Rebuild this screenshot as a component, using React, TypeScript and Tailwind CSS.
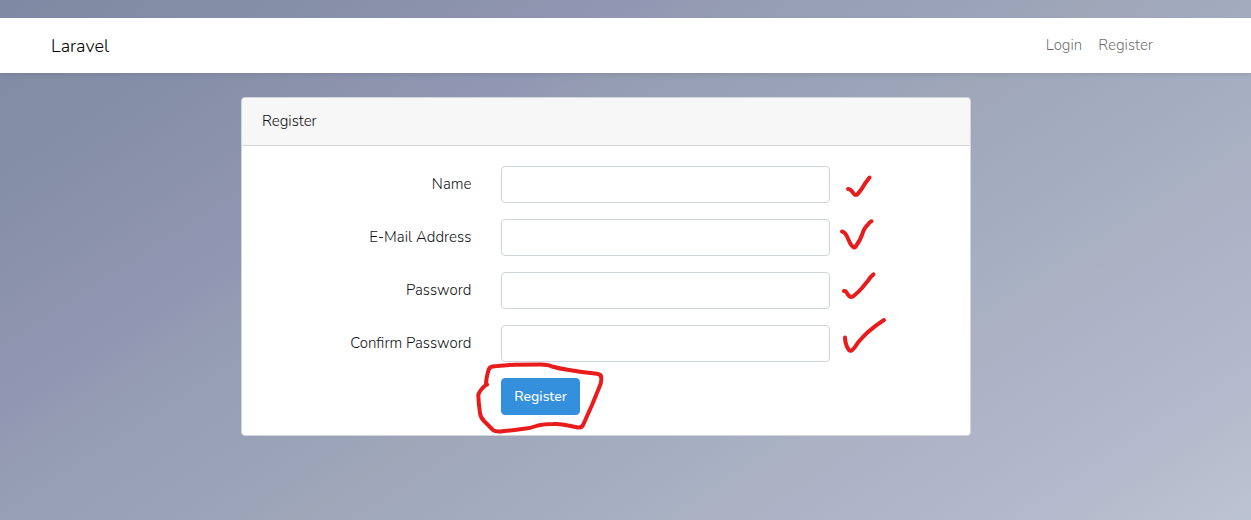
import React from "react";

type Field = { id: string; label: string; type: string; mark: string };

const fields: Field[] = [
  {
    id: "name",
    label: "Name",
    type: "text",
    mark: "M18 23 Q20.5 23 22.5 26 Q25.5 31 28 27.5 Q31 24.5 35 17.5 L39.5 11.5",
  },
  {
    id: "email",
    label: "E-Mail Address",
    type: "email",
    mark: "M12 12.5 Q15 13 17 17.5 L20 24 Q24 31 26 27 Q30 21.5 32 16 Q34 9 38 5.5 Q39 3.5 41.5 2.3",
  },
  {
    id: "password",
    label: "Password",
    type: "password",
    mark: "M14 19 Q16 18.5 17.5 22 Q20 26 23 24.5 Q27 21.5 32 16 L38.5 8 Q40 5 43.5 2.3",
  },
  {
    id: "password-confirm",
    label: "Confirm Password",
    type: "password",
    mark: "M15 12.5 Q15 17 16.5 20.5 Q19 27 21.5 25.5 Q24 24 28 17.5 Q33 11.5 38 7 Q46 0 54 -5",
  },
];

const buttonLoop =
  "M-14 6.5 L-15 5 Q-14.5 0 -13.5 -4 Q-12.5 -9 -11 -10.5 Q-9.5 -11.8 -4 -12 Q6 -13 14 -13.2 L40 -13.4 Q47 -13.4 51 -11.5 Q58 -9.5 68 -8 Q82 -5.5 96 -4.3 Q101 -3.5 100.3 1 Q100.5 5 98 10 L91 27 L82.5 46 Q81 50 77 49.5 Q72 48.5 67 47.5 Q60 45.5 52 46 Q43 46 37 47.5 Q29 50.5 21 51 Q10 52.5 3 53 Q-5 54.5 -8 52 L-17 43 Q-20.5 39.5 -21 35 Q-22.5 25 -22.7 17 Q-22 14 -18 9.5 Q-16 7.5 -14 6.5";

function Stroke({ d, className }: { d: string; className: string }) {
  return (
    <svg
      aria-hidden="true"
      viewBox="0 0 60 37"
      width="60"
      height="37"
      fill="none"
      stroke="#e81c1c"
      strokeWidth="4"
      strokeLinecap="round"
      strokeLinejoin="round"
      className={`pointer-events-none absolute top-0 max-w-none overflow-visible ${className}`}
    >
      <path d={d} />
    </svg>
  );
}

export default function App() {
  return (
    <div className="min-h-screen bg-[linear-gradient(147deg,#7f89a3_0%,#858fa7_14%,#8990aa_18%,#9298b3_32%,#959db2_36%,#9ca4b9_50%,#9ea6b8_53%,#a5adc1_66%,#a8b1c2_71%,#adb1c4_75%,#b3b8cd_88%,#b6bccc_92%,#bcc3d3_100%)] pt-[18px] font-['Nunito','Open_Sans',sans-serif] text-[15px] leading-[23px] font-light text-[#101316]">
      <nav className="bg-white py-2 pr-[39px] shadow-[0_2px_4px_rgba(0,0,0,0.075)]">
        <div className="mx-auto flex max-w-[1140px] items-center justify-between px-[15px]">
          <a href="#home" className="pt-[5px] pb-[3px] text-[18px] leading-[31px] text-black">
            Laravel
          </a>
          <div className="flex text-black/60">
            <a href="#login" className="p-2">
              Login
            </a>
            <a href="#register" className="p-2">
              Register
            </a>
          </div>
        </div>
      </nav>

      <main className="py-6 pr-[39px]">
        <div className="mx-auto max-w-[730px] rounded border border-[#d4d6dc] bg-white">
          <h1 className="rounded-t border-b border-[#d8d8da] bg-[#f7f7f7] px-5 py-3">Register</h1>
          <form className="p-5" onSubmit={(e) => e.preventDefault()}>
            <div className="-mx-[15px] flex flex-col gap-4">
              {fields.map((f) => (
                <div key={f.id} className="grid grid-cols-12">
                  <label htmlFor={f.id} className="col-span-4 px-[15px] py-[7px] text-right">
                    {f.label}
                  </label>
                  <div className="col-span-6 px-[15px]">
                    <div className="relative">
                      <input
                        id={f.id}
                        type={f.type}
                        className="block h-[37px] w-full rounded border border-[#ced4da] bg-white px-3"
                      />
                      <Stroke d={f.mark} className="left-full" />
                    </div>
                  </div>
                </div>
              ))}
              <div className="grid grid-cols-12">
                <div className="col-span-6 col-start-5 px-[15px]">
                  <div className="relative inline-block align-top">
                    <button
                      type="submit"
                      className="block rounded border border-[#3490dc] bg-[#3490dc] px-3 py-[6px] text-[14px] font-medium text-white"
                    >
                      Register
                    </button>
                    <Stroke d={buttonLoop} className="left-0" />
                  </div>
                </div>
              </div>
            </div>
          </form>
        </div>
      </main>
    </div>
  );
}
